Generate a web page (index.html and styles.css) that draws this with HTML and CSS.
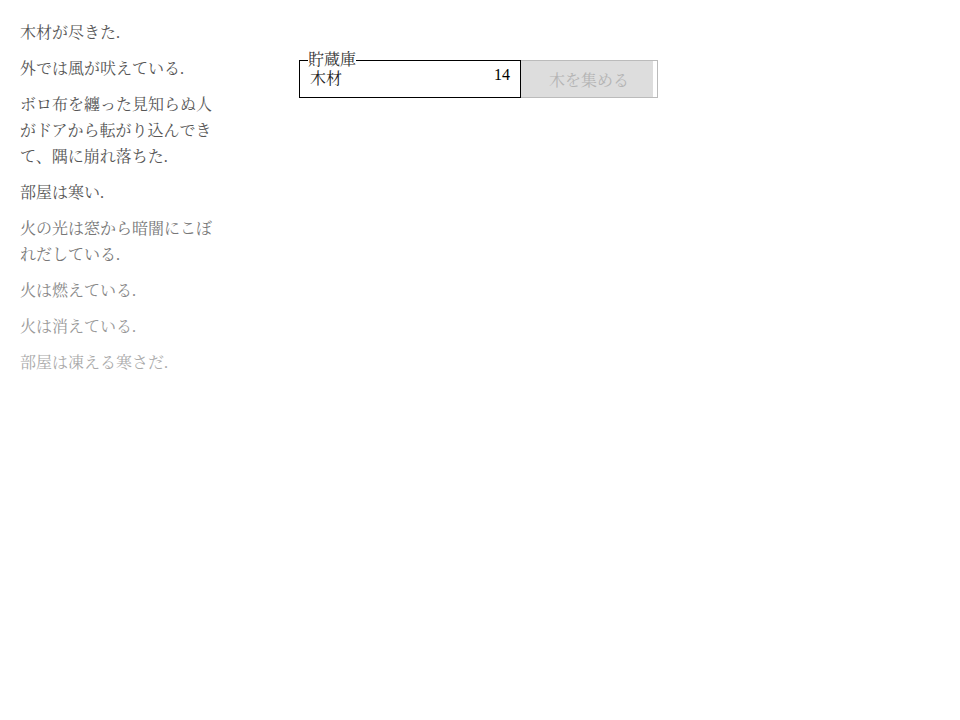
FILE: index.html
```html
<!DOCTYPE html>
<html lang="ja">
<head>
<meta charset="utf-8">
<link rel="stylesheet" href="styles.css">
</head>
<body>
<div class="page">
  <div class="notifications">
    <p class="note">木材が尽きた.</p>
    <p class="note">外では風が吠えている.</p>
    <p class="note">ボロ布を纏った見知らぬ人がドアから転がり込んできて、隅に崩れ落ちた.</p>
    <p class="note">部屋は寒い.</p>
    <p class="note o5">火の光は窓から暗闇にこぼれだしている.</p>
    <p class="note o6">火は燃えている.</p>
    <p class="note o7">火は消えている.</p>
    <p class="note o8">部屋は凍える寒さだ.</p>
  </div>
  <div class="main">
    <div class="stores">
      <div class="stores-title">貯蔵庫</div>
      <div class="store-row"><span class="name">木材</span><span class="num">14</span></div>
    </div>
    <div class="button disabled">
      <div class="cooldown"></div>
      <span class="label">木を集める</span>
    </div>
  </div>
</div>
</body>
</html>
```
FILE: styles.css
```css
html, body {
  margin: 0;
  padding: 0;
  background: #fff;
}
body {
  font-family: "Liberation Serif", "Noto Serif CJK JP", serif;
  font-size: 16px;
  color: #000;
}
.page {
  display: flex;
  padding: 20px 0 0 20px;
}
.notifications {
  width: 195px;
  flex: none;
}
.note {
  margin: 0 0 10px 0;
  line-height: 26px;
  color: #555;
}
.o5 { color: #777; }
.o6 { color: #888; }
.o7 { color: #999; }
.o8 { color: #aaa; }
.main {
  display: flex;
  align-items: flex-start;
  margin-left: 84px;
  padding-top: 40px;
}
.stores {
  position: relative;
  width: 222px;
  height: 38px;
  box-sizing: border-box;
  border: 1px solid #000;
  padding: 4px 10px 0 10px;
}
.stores-title {
  position: absolute;
  top: -10px;
  left: 8px;
  background: #fff;
  line-height: 18px;
  color: #333;
}
.store-row {
  display: flex;
  justify-content: space-between;
  align-items: flex-start;
  line-height: 20px;
  color: #222;
}
.name { padding-top: 4px; }
.num { color: #000; }
.button {
  position: relative;
  width: 137px;
  height: 38px;
  box-sizing: border-box;
  border: 1px solid #bbb;
  border-left: none;
  background: #fff;
  display: flex;
  align-items: center;
  justify-content: center;
}
.cooldown {
  position: absolute;
  left: 0;
  top: 0;
  bottom: 0;
  width: 97%;
  background: #ddd;
}
.label {
  position: relative;
  color: #b4b4b4;
}
```
